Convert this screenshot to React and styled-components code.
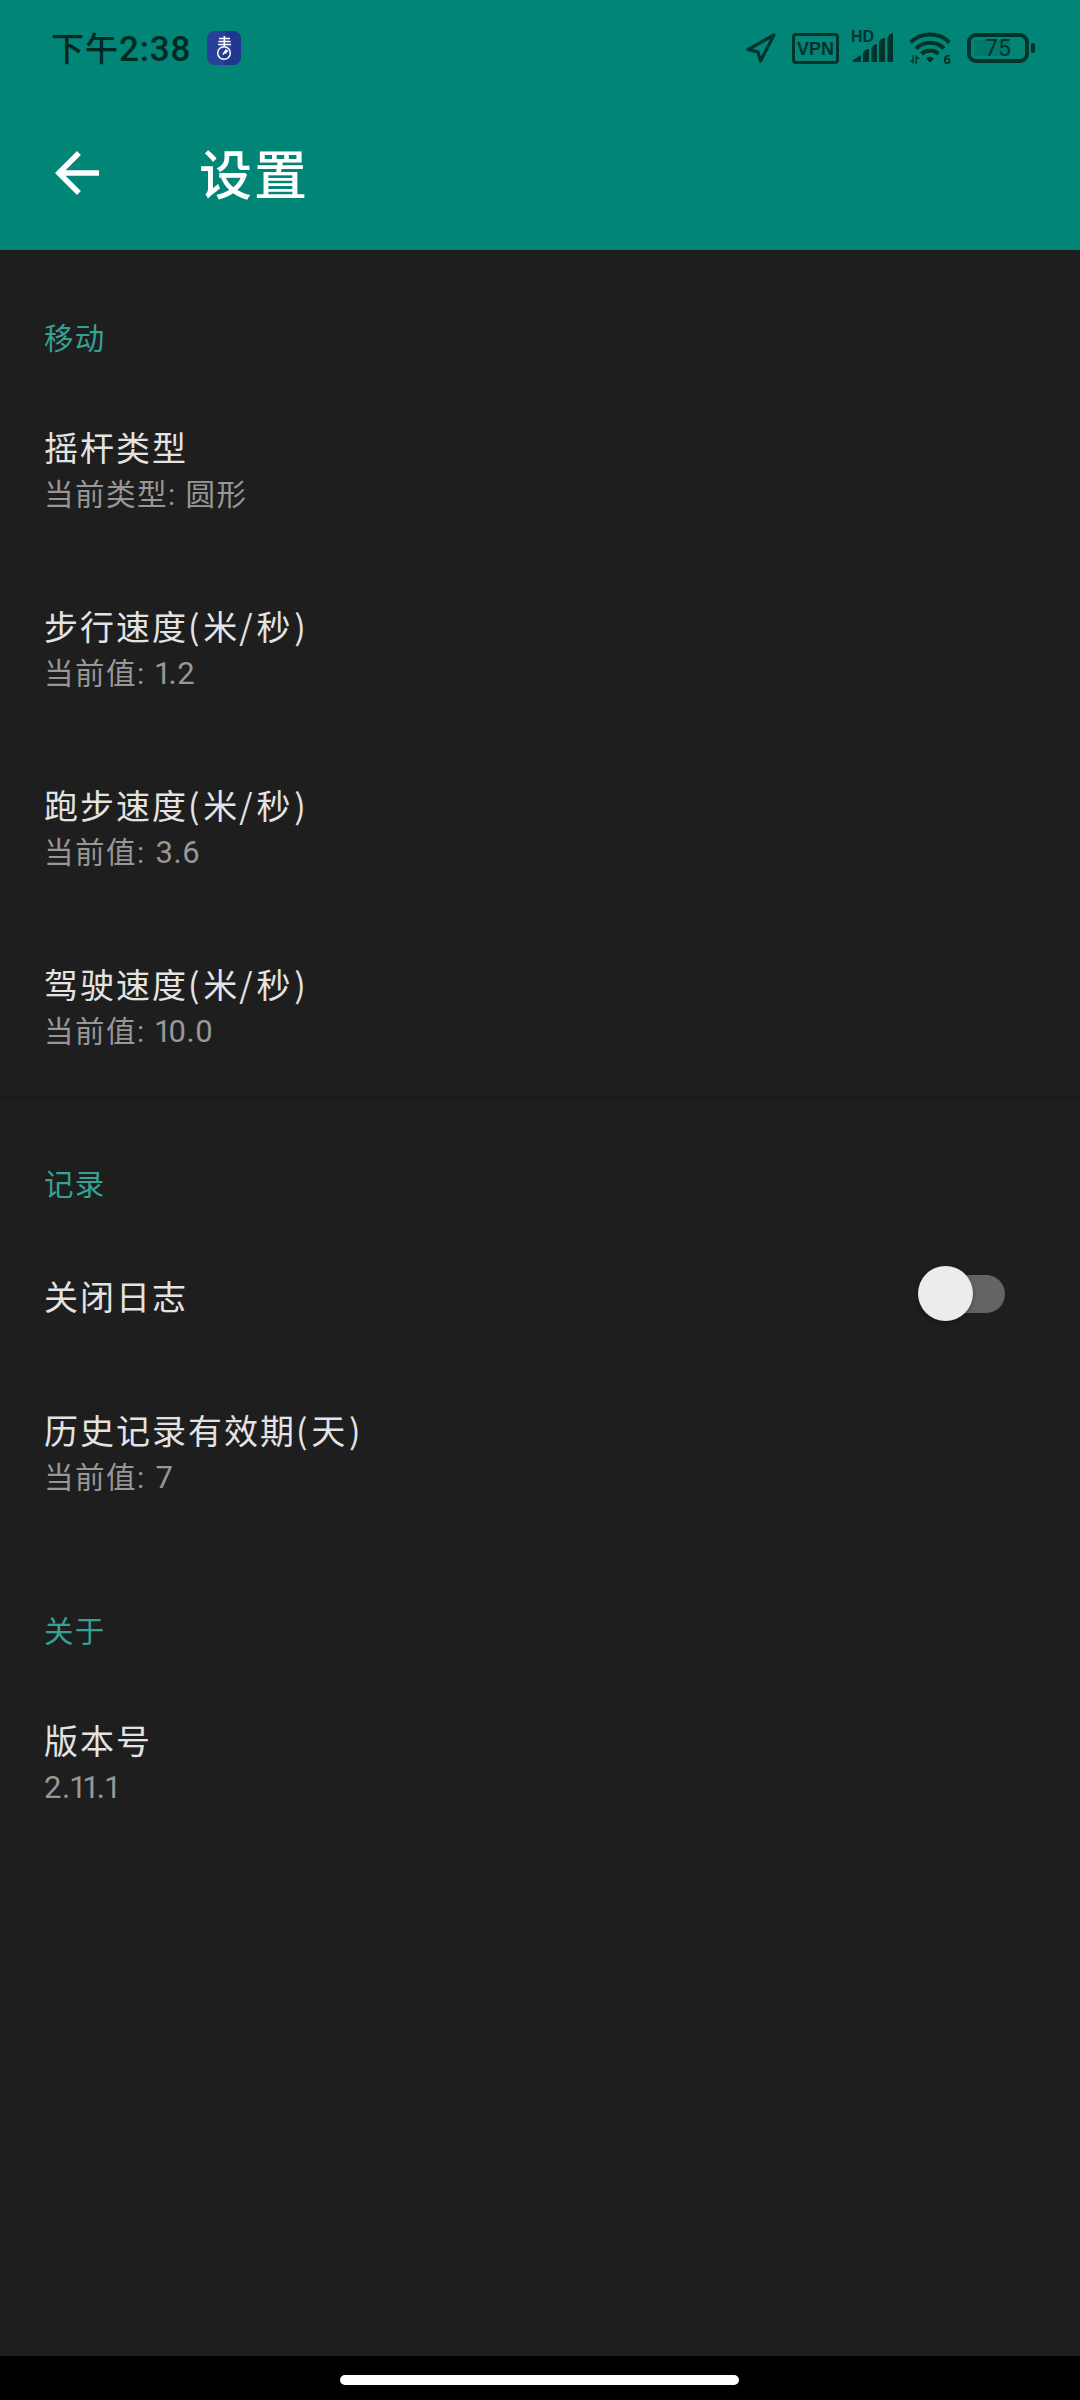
import React from "react";
import styled, { createGlobalStyle } from "styled-components";

const color = {
  primary: "#018577",
  clock: "#012823",
  ink: "#01332d",
  accent: "#35a293",
  background: "#1e1e1e",
  divider: "#1a1a1a",
  title: "#e3e3e3",
  summary: "#979797",
};

const GlobalStyle = createGlobalStyle`
  body {
    margin: 0;
    background: ${color.background};
    font-family: Roboto, "Noto Sans CJK SC", sans-serif;
  }

  * {
    box-sizing: border-box;
  }
`;

const Screen = styled.div`
  display: flex;
  flex-direction: column;
  width: 1080px;
  height: 2400px;
  overflow: hidden;
  background: ${color.background};
`;

const Header = styled.header`
  height: 250px;
  background: ${color.primary};
`;

const StatusBar = styled.div`
  display: flex;
  align-items: center;
  height: 96px;
  padding: 0 45px 0 51px;
  color: ${color.ink};
`;

const Time = styled.span`
  width: 156px;
  padding-top: 3px;
  color: ${color.clock};
  font-size: 33px;
  line-height: 40px;
  font-weight: 500;
  letter-spacing: 1px;
  white-space: nowrap;
`;

const Clock = styled.span`
  font-size: 35px;
  letter-spacing: 0.8px;
`;

const StatusIcons = styled.div`
  display: flex;
  align-items: center;
  margin-left: auto;
`;

const VpnBadge = styled.span`
  width: 47px;
  height: 31px;
  margin: 0 13px 0 16px;
  border: 3px solid ${color.ink};
  border-radius: 4px;
  font-family: "Liberation Sans", sans-serif;
  font-size: 18px;
  font-weight: 700;
  line-height: 26px;
  text-align: center;
`;

const Signal = styled.span`
  position: relative;
  display: flex;
  margin-right: 16px;
`;

const SignalLabel = styled.span`
  position: absolute;
  top: -4px;
  left: -1px;
  font-family: "Liberation Sans", sans-serif;
  font-size: 16px;
  font-weight: 700;
  line-height: 16px;
`;

const Wifi = styled.span`
  position: relative;
  display: flex;
  margin-right: 16px;
`;

const WifiLabel = styled.span`
  position: absolute;
  right: 0;
  bottom: -2px;
  font-family: "Noto Sans", sans-serif;
  font-size: 13px;
  font-weight: 700;
  line-height: 13px;
`;

const Battery = styled.span`
  position: relative;
  width: 62px;
  height: 30px;
  margin-right: 6px;
  border: 4px solid ${color.ink};
  border-radius: 9px;
  font-size: 23px;
  line-height: 24px;
  text-align: center;

  &::before {
    content: "";
    position: absolute;
    top: 3px;
    left: 3px;
    width: 36px;
    height: 16px;
    border-radius: 3px;
    background: rgba(0, 50, 44, 0.14);
  }

  &::after {
    content: "";
    position: absolute;
    top: 6px;
    right: -10px;
    width: 4px;
    height: 10px;
    border-radius: 2px;
    background: ${color.ink};
  }
`;

const AppBar = styled.div`
  display: flex;
  align-items: center;
  height: 154px;
  padding: 0 44px;
`;

const BackButton = styled.button`
  width: 66px;
  height: 66px;
  margin-right: 89px;
  padding: 0;
  border: 0;
  background: none;
`;

const PageTitle = styled.h1`
  margin: 0;
  padding-top: 8px;
  color: #fff;
  font-size: 53px;
  font-weight: 500;
  line-height: 64px;
  letter-spacing: 2px;
`;

const Settings = styled.main`
  flex: 1;
`;

const Section = styled.section`
  & + & {
    box-shadow: inset 0 2px ${color.divider};
  }
`;

const Category = styled.h2`
  height: 131px;
  margin: 0;
  padding: 67px 44px 0;
  color: ${color.accent};
  font-size: 29.5px;
  font-weight: 400;
  line-height: 44px;
  letter-spacing: 1.3px;
`;

const Row = styled.div`
  display: flex;
  align-items: center;
  justify-content: space-between;
  height: ${({ $compact }) => ($compact ? "137px" : "178.75px")};
  padding: 0 75px 0 44px;
`;

const RowTitle = styled.div`
  color: ${color.title};
  font-family: "Noto Sans CJK SC", sans-serif;
  font-size: 34px;
  line-height: 47px;
  letter-spacing: 2px;
`;

const RowSummary = styled.div`
  margin-top: 3px;
  color: ${color.summary};
  font-size: 29.5px;
  line-height: 44px;
  letter-spacing: 1.5px;
`;

const Bracket = styled.span`
  letter-spacing: 3.8px;
`;

const Value = styled.span`
  margin-left: ${({ $spaced }) => ($spaced ? "1px" : "0")};
  font-size: 31px;
  letter-spacing: 0.6px;
`;

// Roboto's figures are all one width, so the "1" is pulled in on both sides
const NarrowOne = styled.span`
  margin-left: -1.5px;
  letter-spacing: -3px;
`;

const Track = styled.span`
  position: relative;
  width: 82px;
  height: 38px;
  margin-bottom: 3px;
  border-radius: 19px;
  background: #646464;
`;

const Thumb = styled.span`
  position: absolute;
  top: -9px;
  left: -5px;
  width: 55px;
  height: 55px;
  border-radius: 50%;
  background: #ececec;
  box-shadow: 0 2px 4px rgba(0, 0, 0, 0.35);
`;

const NavigationBar = styled.footer`
  display: flex;
  justify-content: center;
  height: 44px;
  padding: 19px 1px 0 0;
  background: #000;
`;

const HomeIndicator = styled.span`
  width: 399px;
  height: 10px;
  border-radius: 5px;
  background: #fff;
`;

const AppIcon = () => (
  <svg width="34" height="34" viewBox="0 0 34 34">
    <rect width="34" height="34" rx="8" fill="#293f98" />
    <path d="M17 0h9a8 8 0 0 1 8 8v18a8 8 0 0 1-8 8h-9V20h8V10z" fill="#20378f" />
    <g fill="none" stroke="#fff" strokeWidth="1.5">
      <path d="M12 7.500h11M11.500 10.500h12M11 13.500h13M17.300 5v10" />
      <circle cx="17" cy="22" r="6.300" />
      <path d="M16 23.500l3.500-5M18 22.500l3-3" />
    </g>
  </svg>
);

const LocationIcon = () => (
  <svg width="30" height="30" viewBox="0 0 30 30">
    <path
      d="M28 2L2 16.500l10 2.500L14.500 28z"
      fill="none"
      stroke={color.ink}
      strokeWidth="3.200"
      strokeLinejoin="round"
    />
  </svg>
);

const SignalIcon = () => (
  <svg width="41" height="30" viewBox="0 0 41 30">
    <path
      d="M1 29v-2l8-5v7zM11 29v-9l2-3 4-1v13zM19.500 29V15l2-3 3.500-1v18zM27 29V9l2-3 4-1v24zM35.500 29V4.500l2-3L41 0v29z"
      fill={color.ink}
    />
  </svg>
);

const WifiIcon = () => (
  <svg width="42" height="32" viewBox="0 0 42 32">
    <g fill="none" stroke={color.ink} strokeWidth="4">
      <path d="M1.500 10.500a28 28 0 0 1 39 0" />
      <path d="M7 16.500a20 20 0 0 1 28 0" />
      <path d="M12.500 22a12 12 0 0 1 17 0" />
    </g>
    <path d="M17 26.500q4-4 8 0L21 30.500z" fill={color.ink} />
    <path d="M3.500 23v5.500H0L4.800 32V23zM6.500 32v-9L11 27H8v5z" fill={color.ink} />
  </svg>
);

const BackIcon = () => (
  <svg width="66" height="66" viewBox="0 0 24 24">
    <path
      d="M20 11H7.830l5.590-5.590L12 4l-8 8 8 8 1.410-1.410L7.830 13H20v-2z"
      fill="#fff"
    />
  </svg>
);

const sections = [
  {
    name: "移动",
    rows: [
      { title: "摇杆类型", summary: "当前类型: 圆形" },
      { title: "步行速度(米/秒)", summary: "当前值: ", value: "1.2" },
      { title: "跑步速度(米/秒)", summary: "当前值: ", value: "3.6" },
      { title: "驾驶速度(米/秒)", summary: "当前值: ", value: "10.0" },
    ],
  },
  {
    name: "记录",
    rows: [
      { title: "关闭日志", toggle: true },
      { title: "历史记录有效期(天)", summary: "当前值: ", value: "7" },
    ],
  },
  {
    name: "关于",
    rows: [{ title: "版本号", value: "2.11.1" }],
  },
];

const wrapMatches = (text, pattern, Wrapper) =>
  text
    .split(pattern)
    .map((part, i) => (i % 2 ? <Wrapper key={i}>{part}</Wrapper> : part));

const Preference = ({ title, summary, value, toggle }) => (
  <Row $compact={toggle}>
    <div>
      <RowTitle>{wrapMatches(title, /([(/]|.(?=\)))/, Bracket)}</RowTitle>
      {!toggle && (
        <RowSummary>
          {summary}
          {value && (
            <Value $spaced={Boolean(summary)}>
              {wrapMatches(value, /(1)/, NarrowOne)}
            </Value>
          )}
        </RowSummary>
      )}
    </div>
    {toggle && (
      <Track>
        <Thumb />
      </Track>
    )}
  </Row>
);

const App = () => (
  <>
    <GlobalStyle />
    <Screen>
      <Header>
        <StatusBar>
          <Time>
            下午<Clock>2:38</Clock>
          </Time>
          <AppIcon />
          <StatusIcons>
            <LocationIcon />
            <VpnBadge>VPN</VpnBadge>
            <Signal>
              <SignalLabel>HD</SignalLabel>
              <SignalIcon />
            </Signal>
            <Wifi>
              <WifiIcon />
              <WifiLabel>6</WifiLabel>
            </Wifi>
            <Battery>75</Battery>
          </StatusIcons>
        </StatusBar>
        <AppBar>
          <BackButton>
            <BackIcon />
          </BackButton>
          <PageTitle>设置</PageTitle>
        </AppBar>
      </Header>
      <Settings>
        {sections.map(({ name, rows }) => (
          <Section key={name}>
            <Category>{name}</Category>
            {rows.map((row) => (
              <Preference key={row.title} {...row} />
            ))}
          </Section>
        ))}
      </Settings>
      <NavigationBar>
        <HomeIndicator />
      </NavigationBar>
    </Screen>
  </>
);

export default App;
